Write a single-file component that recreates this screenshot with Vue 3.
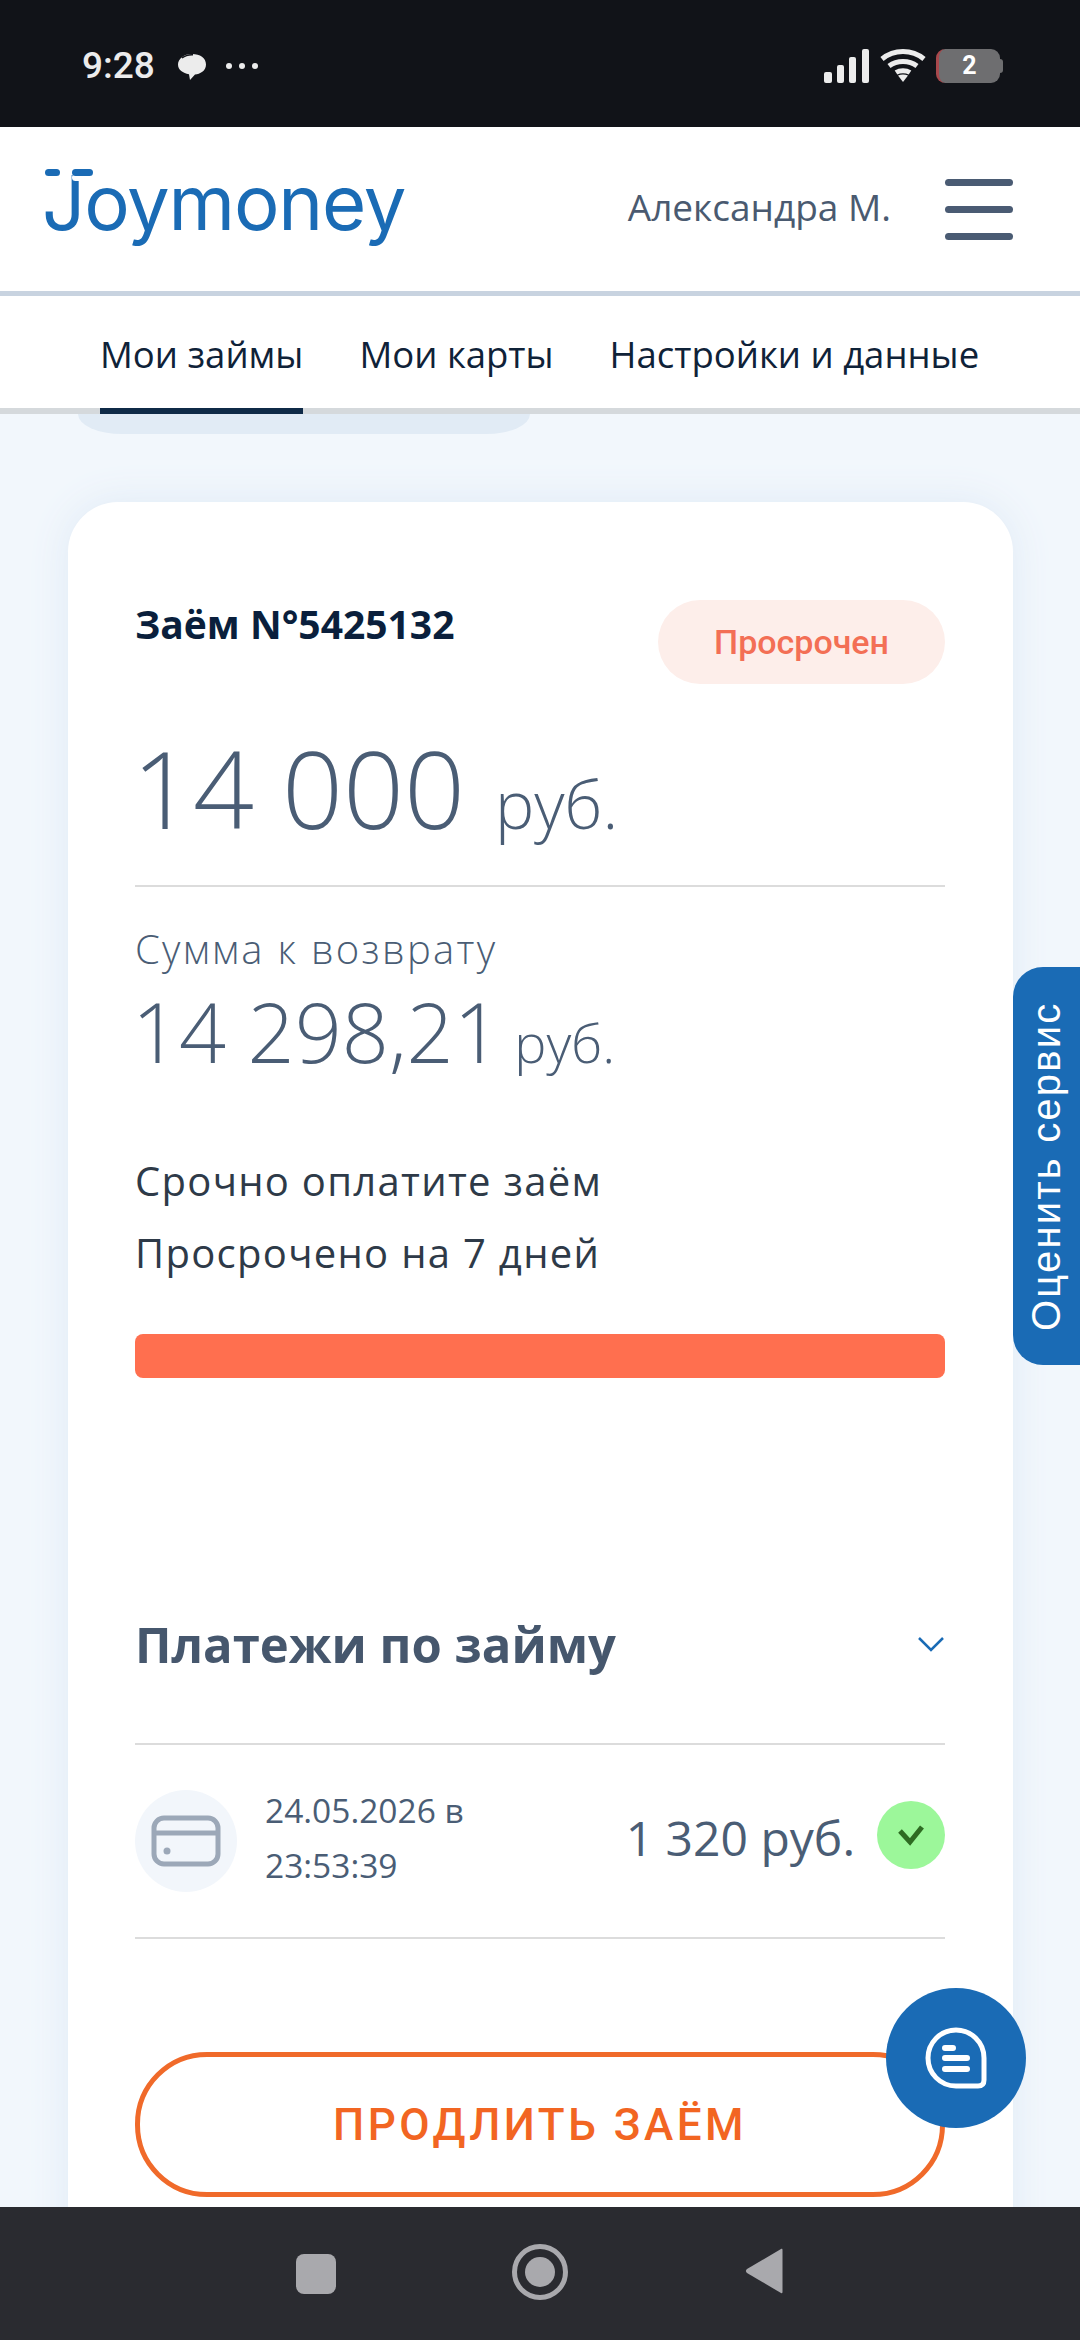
<template>
  <div class="screen">
    <div class="status-bar">
      <div class="status-left">
        <span class="clock">9:28</span>
        <svg class="bubble" width="32" height="32" viewBox="0 0 32 32">
          <path d="M16 4c8 0 14 4 14 10.500S24 24 19 24.500L14 30l-1-5.800C7 23 2 20 2 14.500S8 4 16 4z" fill="#ececec" />
          <path d="M6 8c3-2.500 7-3.500 11-3.300" fill="none" stroke="#111318" stroke-width="1.500" />
        </svg>
        <span class="dots"><i></i><i></i><i></i></span>
      </div>
      <div class="status-right">
        <svg width="46" height="34" viewBox="0 0 46 34" fill="#ececec">
          <rect x="0" y="23" width="8" height="11" rx="2" />
          <rect x="13" y="16" width="7" height="18" rx="2" />
          <rect x="25" y="8" width="7" height="26" rx="2" />
          <rect x="38" y="0" width="7" height="34" rx="2" />
        </svg>
        <svg width="46" height="34" viewBox="0 0 46 34" fill="none" stroke="#ececec" stroke-width="5">
          <path d="M2 10c12-10 30-10 42 0" />
          <path d="M9 17c8-6 20-6 28 0" />
          <path d="M16 23.500c4-2.500 10-2.500 14 0" />
          <path d="M23 33l-5-6.500c3-1.500 7-1.500 10 0z" fill="#ececec" stroke="none" />
        </svg>
        <div class="battery">
          <span class="battery-body">2</span>
          <span class="battery-tip"></span>
        </div>
      </div>
    </div>

    <header class="top-bar">
      <div class="logo">
        <span class="logo-text">Joymoney</span>
        <span class="logo-dots"><i class="dot-a"></i><i class="dot-b"></i></span>
      </div>
      <div class="user">
        <span class="user-name">Александра М.</span>
        <div class="burger"><i></i><i></i><i></i></div>
      </div>
    </header>

    <nav class="tabs">
      <span
        v-for="tab in tabs"
        :key="tab.name"
        :class="['tab', { active: tab.active }]"
      >{{ tab.name }}</span>
    </nav>

    <main class="content">
      <div class="peek"></div>

      <section class="card">
        <div class="card-head">
          <h2 class="loan-no">Заём N°5425132</h2>
          <span class="badge">Просрочен</span>
        </div>

        <div class="amount-big">14 000 <small>руб.</small></div>
        <div class="line"></div>

        <p class="label">Сумма к возврату</p>
        <div class="amount-mid">14 298,21 <small>руб.</small></div>

        <p class="note note-first">Срочно оплатите заём</p>
        <p class="note">Просрочено на 7 дней</p>
        <div class="progress"></div>

        <div class="payments-head">
          <h3>Платежи по займу</h3>
          <svg width="28" height="16" viewBox="0 0 28 16" fill="none" stroke="#1a6bb5" stroke-width="2.500">
            <path d="M2 2l12 12L26 2" />
          </svg>
        </div>
        <div class="line"></div>

        <div class="pay-row">
          <div class="pay-icon">
            <svg width="70" height="52" viewBox="0 0 70 52" fill="none" stroke="#9ca8b8" stroke-width="5">
              <rect x="3" y="3" width="64" height="46" rx="10" />
              <path d="M3 18h64" />
              <circle cx="16" cy="36" r="3.500" fill="#9ca8b8" stroke="none" />
            </svg>
          </div>
          <div class="pay-date">24.05.2026 в<br />23:53:39</div>
          <div class="pay-sum">1 320 руб.</div>
          <div class="pay-ok">
            <svg width="30" height="24" viewBox="0 0 30 24" fill="none" stroke="#2e6b22" stroke-width="5">
              <path d="M4 8l10 11L26 4" />
            </svg>
          </div>
        </div>
        <div class="line"></div>

        <button class="extend">ПРОДЛИТЬ ЗАЁМ</button>
      </section>
    </main>

    <nav class="nav-bar">
      <span class="nav-square"></span>
      <span class="nav-circle"><i></i></span>
      <svg width="40" height="48" viewBox="0 0 40 48">
        <path d="M37 2c1-.500 1.500 0 1.500 1v42c0 1-.500 1.500-1.500 1L3 26c-1.500-1-1.500-3 0-4z" fill="#a9a9ad" />
      </svg>
    </nav>

    <div class="rate-tab">Оценить сервис</div>

    <div class="chat-btn">
      <svg width="62" height="62" viewBox="0 0 62 62" fill="none" stroke="#fff">
        <path d="M31 3c15 0 28 12 28 28v22c0 4-2 6-6 6H31C15 59 3 46 3 31S15 3 31 3z" stroke-width="5" />
        <path d="M20 21h8M20 31h22M20 42h22" stroke-width="6" stroke-linecap="round" />
      </svg>
    </div>
  </div>
</template>

<script setup>
const tabs = [
  { name: "Мои займы", active: true },
  { name: "Мои карты", active: false },
  { name: "Настройки и данные", active: false },
];
</script>

<style>
html,
body {
  margin: 0;
  background: #f2f7fc;
}
</style>

<style scoped>
.screen {
  position: relative;
  width: 1080px;
  height: 2340px;
  overflow: hidden;
  display: flex;
  flex-direction: column;
  background: #f2f7fc;
  font-family: "Open Sans", "Liberation Sans", sans-serif;
  color: #4a5d75;
}

/* статус-бар */
.status-bar {
  height: 127px;
  flex: none;
  background: #111318;
  display: flex;
  align-items: center;
  justify-content: space-between;
  padding: 4px 77px 0 82px;
  box-sizing: border-box;
}
.status-left,
.status-right {
  display: flex;
  align-items: center;
}
.clock {
  color: #ececec;
  font: 500 37px Roboto, sans-serif;
  width: 94px;
}
.bubble {
  margin-right: 18px;
}
.dots {
  display: flex;
  gap: 7px;
}
.dots i {
  width: 6px;
  height: 6px;
  border-radius: 50%;
  background: #ececec;
}
.status-right {
  gap: 10px;
}
.battery {
  display: flex;
  align-items: center;
}
.battery-body {
  width: 64px;
  height: 34px;
  border-radius: 9px;
  background: #6e6e70;
  border-left: 3px solid #a8484c;
  box-sizing: border-box;
  color: #fff;
  font: 700 25px/34px Roboto, sans-serif;
  text-align: center;
}
.battery-tip {
  width: 3px;
  height: 14px;
  background: #6e6e70;
  border-radius: 0 3px 3px 0;
}

/* шапка */
.top-bar {
  height: 169px;
  flex: none;
  background: #fff;
  border-bottom: 5px solid #c8d3e0;
  box-sizing: border-box;
  display: flex;
  justify-content: space-between;
  align-items: center;
  padding: 0 67px 0 45px;
}
.logo {
  position: relative;
  height: 72px;
  width: 360px;
  margin-top: -8px;
}
.logo-dots {
  position: absolute;
  left: 0;
  top: 0;
  display: flex;
  gap: 12px;
}
.logo-dots i {
  height: 7px;
  border-radius: 4px;
  background: #1a6bb5;
}
.dot-a {
  width: 15px;
}
.dot-b {
  width: 21px;
  box-shadow: 0 5px 0 #fff;
}
.logo-text {
  position: absolute;
  left: -3px;
  top: -13px;
  font: 400 76px/92px Inter, sans-serif;
  letter-spacing: -1.200px;
  color: #1a6bb5;
}
.user {
  display: flex;
  align-items: center;
  gap: 54px;
}
.user-name {
  font-size: 37px;
  font-weight: 500;
  color: #4a5a70;
  margin-top: -6px;
}
.burger {
  display: flex;
  flex-direction: column;
  gap: 20px;
  width: 68px;
}
.burger i {
  height: 7px;
  border-radius: 4px;
  background: #4a5b73;
}

/* вкладки */
.tabs {
  height: 118px;
  flex: none;
  background: #fff;
  border-bottom: 6px solid #d5d9dc;
  box-sizing: border-box;
  display: flex;
  gap: 56px;
  padding-left: 100px;
}
.tab {
  height: 118px;
  box-sizing: border-box;
  line-height: 116px;
  font-size: 36.500px;
  color: #0f2238;
  white-space: nowrap;
}
.tab.active {
  border-bottom: 6px solid #0f2a47;
}

.content {
  flex: 1;
  min-height: 0;
  padding: 0 67px 0 68px;
}
.peek {
  width: 452px;
  height: 20px;
  margin-left: 10px;
  background: #e1ebf5;
  border-radius: 0 0 44px 44px / 0 0 20px 20px;
}

/* карточка займа */
.card {
  margin-top: 68px;
  height: 1800px;
  padding: 100px 68px 0 67px;
  box-sizing: border-box;
  background: #fff;
  border-radius: 50px 50px 0 0;
  box-shadow: 0 0 40px #dfeaf6;
}
.card-head {
  display: flex;
  justify-content: space-between;
  align-items: flex-start;
}
.loan-no {
  margin: 0;
  font-size: 39px;
  line-height: 44px;
  font-weight: 700;
  color: #0a1f3c;
}
.badge {
  width: 287px;
  height: 84px;
  margin-top: -2px;
  border-radius: 42px;
  background: #fdeeea;
  color: #f36f55;
  font: 500 34px/84px Roboto, sans-serif;
  text-align: center;
}
.amount-big {
  margin: 40px 0 0 -3px;
  font-size: 107px;
  line-height: 128px;
  font-weight: 300;
  white-space: nowrap;
}
.amount-big small {
  font-size: 66px;
  margin-left: 2px;
}
.line {
  height: 2px;
  background: #dcdcdc;
}
.amount-big + .line {
  margin-top: 18px;
}
.label {
  margin: 39px 0 0;
  font-size: 40px;
  line-height: 46px;
  font-weight: 300;
  letter-spacing: 2.300px;
}
.amount-mid {
  margin: 7px 0 0 -3px;
  font-size: 82.500px;
  line-height: 104px;
  font-weight: 300;
  white-space: nowrap;
}
.amount-mid small {
  font-size: 54px;
  margin-left: -8px;
}
.note {
  margin: 0;
  font-size: 40px;
  line-height: 72px;
  color: #2e3a48;
  letter-spacing: 1.300px;
}
.note-first {
  margin-top: 51px;
}
.progress {
  height: 44px;
  margin-top: 45px;
  background: #ff6f4f;
  border-radius: 8px;
}
.payments-head {
  margin-top: 226px;
  height: 80px;
  display: flex;
  align-items: center;
  justify-content: space-between;
}
.payments-head h3 {
  margin: 0;
  font-size: 49px;
  font-weight: 700;
  color: #46576d;
}
.payments-head + .line {
  margin-top: 59px;
}
.pay-row {
  height: 192px;
  display: flex;
  align-items: center;
}
.pay-icon {
  width: 102px;
  height: 102px;
  border-radius: 50%;
  background: #f2f6fb;
  display: flex;
  align-items: center;
  justify-content: center;
  flex: none;
}
.pay-date {
  margin: -6px 0 0 28px;
  font-size: 33.500px;
  line-height: 55px;
}
.pay-sum {
  margin: -8px 0 0 auto;
  font-size: 48px;
}
.pay-ok {
  width: 68px;
  height: 68px;
  border-radius: 50%;
  background: #9cf79a;
  margin: -12px 0 0 22px;
  display: flex;
  align-items: center;
  justify-content: center;
}
.extend {
  display: block;
  width: 100%;
  height: 145px;
  margin-top: 113px;
  background: #fff;
  border: 5px solid #f06a2a;
  border-radius: 72px;
  color: #f26522;
  font: 500 44px Roboto, sans-serif;
  letter-spacing: 3.500px;
}

/* нижняя панель */
.nav-bar {
  position: absolute;
  left: 0;
  right: 0;
  bottom: 0;
  height: 133px;
  background: #2a2b30;
}
.nav-bar > * {
  position: absolute;
}
.nav-square {
  left: 296px;
  top: 47px;
  width: 40px;
  height: 40px;
  border-radius: 8px;
  background: #a9a9ad;
}
.nav-circle {
  left: 512px;
  top: 37px;
  width: 46px;
  height: 46px;
  border: 5px solid #a9a9ad;
  border-radius: 50%;
  display: flex;
  align-items: center;
  justify-content: center;
}
.nav-circle i {
  width: 30px;
  height: 30px;
  border-radius: 50%;
  background: #a9a9ad;
}
.nav-bar svg {
  left: 744px;
  top: 40px;
}

.rate-tab {
  position: absolute;
  right: 0;
  top: 967px;
  width: 67px;
  height: 398px;
  border-radius: 0 30px 30px 0;
  background: #1a6bb5;
  color: #fff;
  font: 400 40px/67px "Liberation Sans", sans-serif;
  letter-spacing: 2.200px;
  writing-mode: vertical-rl;
  transform: rotate(180deg);
  text-align: center;
  white-space: nowrap;
}

.chat-btn {
  position: absolute;
  left: 886px;
  top: 1988px;
  width: 140px;
  height: 140px;
  border-radius: 50%;
  background: #1a6bb5;
  display: flex;
  align-items: center;
  justify-content: center;
}
</style>
